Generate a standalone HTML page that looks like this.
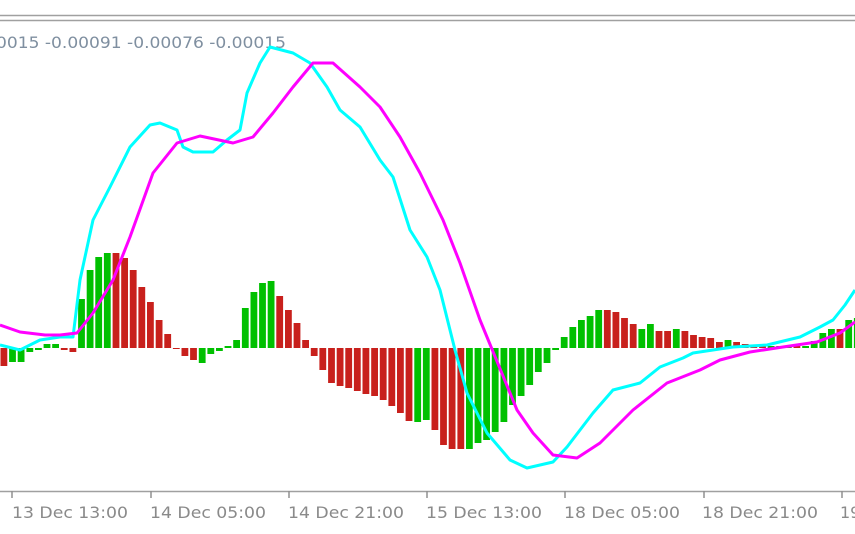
<!DOCTYPE html><html><head><style>
html,body{margin:0;padding:0;background:#fff;width:855px;height:534px;overflow:hidden}
svg{display:block}
text{font-family:"DejaVu Sans","Liberation Sans",sans-serif;font-size:16px;fill:#8a8a8a}
</style></head><body>
<svg id="s" width="855" height="534" xmlns="http://www.w3.org/2000/svg">
<line x1="0" y1="15.5" x2="855" y2="15.5" stroke="#a0a0a0" stroke-width="1.5"/>
<line x1="0" y1="20.5" x2="855" y2="20.5" stroke="#a0a0a0" stroke-width="1.5"/>
<text x="-4" y="48" style="fill:#7f8fa0" textLength="290" lengthAdjust="spacingAndGlyphs">0015 -0.00091 -0.00076 -0.00015</text>
<g id="bars"></g>
<polyline fill="none" stroke="#00ffff" stroke-width="3" stroke-linejoin="round" points="0,345 20,350 40,340 60,337 73,337 80,280 93,220 110,187 130,147 150,125 160,123 177,130 183,147 193,152 213,152 227,140 240,130 247,93 260,63 270,47 293,53 310,63 327,87 340,110 360,127 380,160 393,177 410,230 427,257 440,290 455,350 467,393 487,433 510,460 527,468 553,462 567,447 593,413 613,390 640,383 660,367 683,358 693,353 733,347 767,345 800,337 820,327 833,320 845,305 855,290"/>
<polyline fill="none" stroke="#ff00ff" stroke-width="3" stroke-linejoin="round" points="0,325 20,332 45,335 60,335 77,333 93,313 113,280 130,237 153,173 177,143 200,136 233,143 253,137 273,113 293,87 313,63 333,63 360,87 380,107 400,137 420,173 443,220 460,263 480,320 517,410 533,433 553,455 577,458 600,443 633,410 667,383 700,370 720,360 750,352 783,347 817,342 840,333 855,322"/>
<line x1="0" y1="491.5" x2="855" y2="491.5" stroke="#a0a0a0" stroke-width="1.5"/>
<g stroke="#909090" stroke-width="1.5">
<line x1="12" y1="491" x2="12" y2="498"/><line x1="151" y1="491" x2="151" y2="498"/><line x1="289" y1="491" x2="289" y2="498"/><line x1="427" y1="491" x2="427" y2="498"/><line x1="565" y1="491" x2="565" y2="498"/><line x1="704" y1="491" x2="704" y2="498"/><line x1="842" y1="491" x2="842" y2="498"/>
</g>
<g>
<text x="12" y="518" textLength="116" lengthAdjust="spacingAndGlyphs">13 Dec 13:00</text>
<text x="150" y="518" textLength="116" lengthAdjust="spacingAndGlyphs">14 Dec 05:00</text>
<text x="288" y="518" textLength="116" lengthAdjust="spacingAndGlyphs">14 Dec 21:00</text>
<text x="426" y="518" textLength="116" lengthAdjust="spacingAndGlyphs">15 Dec 13:00</text>
<text x="564" y="518" textLength="116" lengthAdjust="spacingAndGlyphs">18 Dec 05:00</text>
<text x="702" y="518" textLength="116" lengthAdjust="spacingAndGlyphs">18 Dec 21:00</text>
<text x="840" y="518">19</text>
</g>
</svg>
<script>
var B=348,sp=8.62,w=6.8;
var d=[[-18,'r'],[-14,'g'],[-14,'g'],[-4,'g'],[-2,'g'],[4,'g'],[4,'g'],[-2,'r'],[-4,'r'],[49,'g'],[78,'g'],[91,'g'],[95,'g'],[95,'r'],[90,'r'],[78,'r'],[61,'r'],[46,'r'],[28,'r'],[14,'r'],[-1,'r'],[-8,'r'],[-12,'r'],[-15,'g'],[-6,'g'],[-3,'g'],[0,'g'],[8,'g'],[40,'g'],[56,'g'],[65,'g'],[67,'g'],[52,'r'],[38,'r'],[25,'r'],[8,'r'],[-8,'r'],[-22,'r'],[-35,'r'],[-38,'r'],[-40,'r'],[-43,'r'],[-46,'r'],[-48,'r'],[-52,'r'],[-58,'r'],[-65,'r'],[-73,'r'],[-74,'g'],[-72,'g'],[-82,'r'],[-97,'r'],[-101,'r'],[-101,'r'],[-101,'g'],[-95,'g'],[-92,'g'],[-84,'g'],[-74,'g'],[-57,'g'],[-48,'g'],[-37,'g'],[-24,'g'],[-15,'g'],[-2,'g'],[11,'g'],[21,'g'],[28,'g'],[32,'g'],[38,'g'],[38,'r'],[36,'r'],[30,'r'],[24,'r'],[19,'g'],[24,'g'],[17,'r'],[17,'r'],[19,'g'],[17,'r'],[13,'r'],[11,'r'],[10,'r'],[6,'r'],[8,'g'],[6,'r'],[4,'r'],[3,'r'],[2,'r'],[2,'g'],[2,'g'],[2,'g'],[2,'r'],[2,'g'],[7,'g'],[15,'g'],[19,'g'],[19,'r'],[28,'g'],[30,'g']];
var s='';
for(var i=0;i<d.length;i++){var x=i*sp+0.5,h=d[i][0],c=d[i][1]=='g'?'#00c000':'#c8201c';
if(h==0)h=2;var y=h>0?B-h:B,hh=Math.abs(h);s+='<rect x="'+x.toFixed(1)+'" y="'+y+'" width="'+w+'" height="'+hh+'" fill="'+c+'"/>';}
document.getElementById('bars').innerHTML=s;
</script>
</body></html>
